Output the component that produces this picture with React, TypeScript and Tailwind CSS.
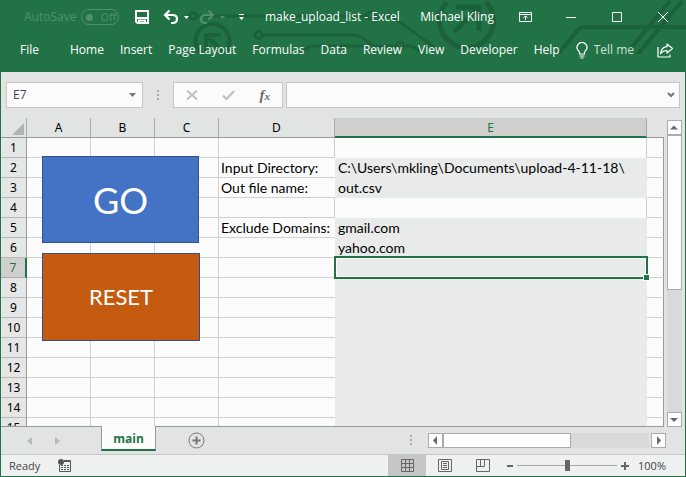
import type { ReactNode } from "react";

const tabs = ["Home", "Insert", "Page Layout", "Formulas", "Data", "Review", "View", "Developer", "Help"];

const cells: Record<number, { d?: string; e?: string }> = {
  2: { d: "Input Directory:", e: "C:\\Users\\mkling\\Documents\\upload-4-11-18\\" },
  3: { d: "Out file name:", e: "out.csv" },
  5: { d: "Exclude Domains:", e: "gmail.com" },
  6: { e: "yahoo.com" },
};

const rows = Array.from({ length: 15 }, (_, i) => i + 1);

function HeaderArt() {
  return (
    <svg className="absolute left-0 top-0 h-[54px] w-[686px]" viewBox="0 0 686 54" fill="none" stroke="#1b613a" strokeWidth="3" aria-hidden="true">
      <circle cx="193" cy="16" r="3.5" />
      <path d="M197 16H367M374 16H392L443 54" />
      <circle cx="370.500" cy="15.500" r="3.500" />
      <circle cx="212.500" cy="41" r="17" strokeWidth="4" />
      <path d="M206 51V35H221M207 36L225 54" strokeWidth="4" />
      <circle cx="258.500" cy="35" r="3.500" />
      <path d="M262 35H354Q360 35 364 39L372 46M302 54Q306 46 314 46H396M404 46H408Q414 46 418 50L424 54" />
      <circle cx="400" cy="45.500" r="3.500" />
      <path d="M447 2A27 27 0 1 0 486 2" strokeWidth="5" />
      <path d="M456 7H479V31M478 8L454 32" strokeWidth="5" />
      <path d="M558 54L578 30Q580 27 584 27H686M626 54L670 1M638 54L682 1" strokeWidth="4" />
    </svg>
  );
}

function Caret({ className }: { className: string }) {
  return (
    <svg className={className} width="5" height="3" viewBox="0 0 5 3" fill="currentColor" aria-hidden="true">
      <path d="M0 0H5L2.500 3Z" />
    </svg>
  );
}

function Undo({ flip }: { flip?: boolean }) {
  return (
    <svg width="16" height="16" viewBox="0 0 16 16" fill="none" stroke="currentColor" strokeWidth="2.200" className={flip ? "-scale-x-100" : ""} aria-hidden="true">
      <path d="M6.500 1.500L2 6L6.500 10.500M2.500 6H9.500Q14 6 14 10T9.500 14H8" />
    </svg>
  );
}

function ScrollButton({ label, d, className = "" }: { label: string; d: string; className?: string }) {
  return (
    <button aria-label={label} className={`flex h-[15px] w-[15px] shrink-0 items-center justify-center border border-[#ababab] bg-[#fdfdfd] text-[#6a6a6a] ${className}`}>
      <svg width="9" height="9" viewBox="0 0 9 9" fill="currentColor" aria-hidden="true">
        <path d={d} />
      </svg>
    </button>
  );
}

function Dots() {
  return (
    <svg width="2" height="10" viewBox="0 0 2 10" fill="#a8a8a8" aria-hidden="true">
      <path d="M0 0H2V2H0ZM0 4H2V6H0ZM0 8H2V10H0Z" />
    </svg>
  );
}

function WindowButton({ label, children }: { label: string; children: ReactNode }) {
  return (
    <button aria-label={label} className="flex h-8 w-[46px] items-center justify-center">
      <svg width="13" height="12" viewBox="0 0 13 12" fill="none" stroke="currentColor" aria-hidden="true">
        {children}
      </svg>
    </button>
  );
}

function TitleBar() {
  return (
    <div className="relative flex h-[34px] items-center pl-6">
      <label className="flex items-center gap-[5px] text-[#4f9169]">
        AutoSave
        <span className="flex h-4 w-[38px] items-center gap-[7px] rounded-full border border-[#4f9169] pl-1 text-[11px]">
          <input type="checkbox" className="h-[7px] w-[7px] shrink-0 appearance-none rounded-full bg-[#4f9169]" />
          Off
        </span>
      </label>
      <button aria-label="Save" className="ml-4">
        <svg width="14" height="14" viewBox="0 0 14 14" fill="none" stroke="currentColor" strokeWidth="2" aria-hidden="true">
          <path d="M1 1H13V13H2.500L1 11.500ZM1 8H13M4 13V10.500H10V13" />
        </svg>
      </button>
      <button aria-label="Undo" className="ml-[14px]">
        <Undo />
      </button>
      <Caret className="ml-[5px]" />
      <button aria-label="Redo" className="ml-[10px] text-[#4f9169]">
        <Undo flip />
      </button>
      <Caret className="ml-[5px] text-[#4f9169]" />
      <button aria-label="Customize Quick Access Toolbar" className="ml-[14px]">
        <svg width="5" height="6" viewBox="0 0 5 6" fill="currentColor" aria-hidden="true">
          <path d="M0 0H5V1H0ZM0 3H5L2.500 6Z" />
        </svg>
      </button>
      <div className="flex-1 whitespace-pre text-center">make_upload_list - Excel</div>
      <div>Michael Kling</div>
      <div className="ml-2 flex">
        <WindowButton label="Ribbon Display Options">
          <path d="M.5 1.500H12.500V10.500H.5ZM.5 3.500H12.500M6.500 9V5M4.500 6.800L6.500 4.800L8.500 6.800" />
        </WindowButton>
        <WindowButton label="Minimize">
          <path d="M1 6.500H11" />
        </WindowButton>
        <WindowButton label="Maximize">
          <path d="M1.500 1.500H10.500V10.500H1.500Z" />
        </WindowButton>
        <WindowButton label="Close">
          <path d="M1 1L11 11M11 1L1 11" />
        </WindowButton>
      </div>
    </div>
  );
}

function RibbonTabs() {
  return (
    <nav className="relative flex h-[38px] items-center whitespace-nowrap pb-[6px] pl-5 pr-3">
      <button className="mr-[31px]">File</button>
      <div className="flex gap-4">
        {tabs.map((t) => (
          <button key={t}>{t}</button>
        ))}
      </div>
      <button className="ml-4 flex items-center gap-[6px] text-[#cfe2d6]">
        <svg width="12" height="17" viewBox="0 0 12 17" fill="none" stroke="#fff" strokeWidth="1.200" aria-hidden="true">
          <path d="M3.500 12V10.500Q3.500 9.500 2 8.200A4.900 4.900 0 1 1 10 8.200Q8.500 9.500 8.500 10.500V12ZM3.500 14H8.500M4.500 16H7.500" />
        </svg>
        Tell me
      </button>
      <button aria-label="Share" className="ml-auto">
        <svg width="17" height="15" viewBox="0 0 17 15" fill="none" stroke="currentColor" strokeWidth="1.200" aria-hidden="true">
          <path d="M1 4V14H13V11.500" />
          <path d="M10 1L15.500 5.500L10 10V7.500Q6 7.500 3.500 10.500Q4.500 4 10 3.700Z" strokeLinejoin="round" />
        </svg>
      </button>
    </nav>
  );
}

function FormulaBar() {
  return (
    <div className="flex items-center pb-[10px] pl-[5px] pr-[5px] pt-[10px]">
      <div className="flex h-[26px] w-[137px] items-center border border-[#c6c6c6] bg-[#fbfbfb] pr-[6px]">
        <input aria-label="Name Box" defaultValue="E7" className="w-full min-w-0 bg-transparent pl-[6px] text-[#444] outline-none" />
        <svg width="7" height="4" viewBox="0 0 7 4" fill="#777" className="shrink-0" aria-hidden="true">
          <path d="M0 0H7L3.500 4Z" />
        </svg>
      </div>
      <div className="flex w-[30px] justify-center">
        <Dots />
      </div>
      <div className="flex h-[26px] w-[110px] shrink-0 items-center justify-between border border-[#c6c6c6] bg-[#fbfbfb] pl-3 pr-3 text-[#c0c0c0]">
        <button aria-label="Cancel">
          <svg width="12" height="10" viewBox="0 0 12 10" fill="none" stroke="currentColor" strokeWidth="2" aria-hidden="true">
            <path d="M1 .5L11 9.500M11 .5L1 9.500" />
          </svg>
        </button>
        <button aria-label="Enter">
          <svg width="13" height="10" viewBox="0 0 13 10" fill="none" stroke="currentColor" strokeWidth="2.200" aria-hidden="true">
            <path d="M1 5.500L4.500 9L12 1" />
          </svg>
        </button>
        <button aria-label="Insert Function" className="font-['Liberation_Serif',serif] text-[15px] font-bold italic leading-4 text-[#6a6a6a]">
          f<span className="text-[11px]">x</span>
        </button>
      </div>
      <div className="ml-[3px] flex h-[26px] flex-1 items-center border border-[#c6c6c6] bg-[#fbfbfb] pr-1">
        <input aria-label="Formula Bar" className="w-full min-w-0 bg-transparent pl-2 text-[#444] outline-none" />
        <svg width="8" height="6" viewBox="0 0 8 6" fill="none" stroke="#777" strokeWidth="2" className="shrink-0" aria-hidden="true">
          <path d="M1 1L4 4L7 1" />
        </svg>
      </div>
    </div>
  );
}

const headCell =
  "h-5 border-b border-r border-b-[#999] border-r-[#ababab] p-0 text-center font-['Noto_Sans',sans-serif] text-[12px] font-normal leading-[19px]";
const gridCell = "h-5 overflow-visible whitespace-nowrap border-b border-r border-[#d0d0d0] p-0";

function Sheet() {
  return (
    <div className="relative min-w-0 flex-1 overflow-hidden border-b border-[#999] font-['Lato','Noto_Sans',sans-serif] text-[14px] text-black">
      <table className="w-full table-fixed border-separate border-spacing-0">
        <colgroup>
          <col className="w-[26px]" />
          <col className="w-16" />
          <col className="w-16" />
          <col className="w-16" />
          <col className="w-[116px]" />
          <col />
          <col className="w-[17px]" />
        </colgroup>
        <thead>
          <tr>
            <th className={headCell} aria-label="Select all">
              <svg width="12" height="12" viewBox="0 0 12 12" fill="#b2b2b2" className="ml-[11px] mt-[2px] block" aria-hidden="true">
                <path d="M12 0V12H0Z" />
              </svg>
            </th>
            {["A", "B", "C", "D"].map((c) => (
              <th key={c} scope="col" className={headCell}>
                {c}
              </th>
            ))}
            <th
              scope="col"
              className="h-5 border-b-2 border-r border-b-[#217346] border-r-[#ababab] bg-[#cfcfcf] p-0 pt-[2px] text-center font-['Noto_Sans',sans-serif] text-[12px] font-normal leading-4 text-[#217346]"
            >
              E
            </th>
            <th className="h-5 border-b border-[#999] p-0" aria-label="Next column" />
          </tr>
        </thead>
        <tbody>
          {rows.map((r) => {
            const filled = r !== 1 && r !== 4;
            return (
              <tr key={r}>
                <th
                  scope="row"
                  className={
                    r === 7
                      ? "h-5 border-b border-r-2 border-b-[#ababab] border-r-[#217346] bg-[#cfcfcf] p-0 text-center font-['Noto_Sans',sans-serif] text-[12px] font-normal leading-[19px] text-[#217346]"
                      : "h-5 border-b border-r border-b-[#b8b8b8] border-r-[#999] bg-[#e4e7e6] p-0 text-center font-['Noto_Sans',sans-serif] text-[12px] font-normal leading-[19px]"
                  }
                >
                  {r}
                </th>
                <td className={`${gridCell} bg-[#fcfcfc]`} />
                <td className={`${gridCell} bg-[#fcfcfc]`} />
                <td className={`${gridCell} bg-[#fcfcfc]`} />
                <td className={`h-5 whitespace-nowrap border-b border-[#d0d0d0] bg-[#fcfcfc] p-0 pl-[2px] leading-[19px] ${filled ? "" : "border-r"}`}>{cells[r]?.d}</td>
                <td
                  className={
                    filled
                      ? "relative h-5 whitespace-nowrap bg-[#e8ebe9] p-0 pl-[3px] leading-5"
                      : "h-5 border-r border-[#d0d0d0] bg-[#fcfcfc] p-0"
                  }
                >
                  {cells[r]?.e}
                  {r === 7 && (
                    <span className="absolute -bottom-px -left-px -right-px -top-[2px] z-10 border-2 border-[#217346] shadow-[inset_0_0_0_1px_#fff]">
                      <span className="absolute -bottom-[4px] -right-[4px] h-[7px] w-[7px] border border-white bg-[#217346]" />
                    </span>
                  )}
                </td>
                <td className="h-5 border-b border-r border-b-[#d0d0d0] border-r-[#999] bg-[#fcfcfc] p-0" />
              </tr>
            );
          })}
        </tbody>
      </table>
      <button className="absolute left-[41px] top-[38px] h-[87px] w-[157px] border border-[#2f528f] bg-[#4472c4] text-[36px] text-white">GO</button>
      <button className="absolute left-[41px] top-[135px] h-[88px] w-[158px] border border-[#2f528f] bg-[#c55a11] text-[22px] text-white">RESET</button>
    </div>
  );
}

function SheetTabs() {
  return (
    <div className="flex h-[27px] shrink-0 items-start pr-[19px]">
      <div className="flex h-[27px] w-[100px] items-center gap-[23px] pl-[26px] text-[#b8b8b8]">
        <button aria-label="Previous sheet">
          <svg width="5" height="8" viewBox="0 0 5 8" fill="currentColor" aria-hidden="true">
            <path d="M5 0V8L0 4Z" />
          </svg>
        </button>
        <button aria-label="Next sheet">
          <svg width="5" height="8" viewBox="0 0 5 8" fill="currentColor" aria-hidden="true">
            <path d="M0 0V8L5 4Z" />
          </svg>
        </button>
      </div>
      <button className="relative -mt-px h-[25px] w-[55px] border-x border-b-2 border-x-[#999] border-b-[#217346] bg-[#fcfcfc] pt-[2px] text-[12px] font-bold text-[#217346]">
        main
      </button>
      <button aria-label="New sheet" className="ml-8 mt-[5px]">
        <svg width="17" height="17" viewBox="0 0 17 17" fill="none" stroke="#777" aria-hidden="true">
          <circle cx="8.500" cy="8.500" r="7.500" />
          <path d="M8.500 4.500V12.500M4.500 8.500H12.500" strokeWidth="2" />
        </svg>
      </button>
      <div className="ml-auto mr-4 mt-2">
        <Dots />
      </div>
      <div className="mt-[6px] flex w-[238px]">
        <ScrollButton label="Scroll left" d="M6 0V9L2 4.500Z" />
        <div className="mr-[2px] flex flex-1 bg-[#d9d9d9]">
          <div className="h-[15px] w-[128px] border border-[#ababab] bg-[#fdfdfd]" />
        </div>
        <ScrollButton label="Scroll right" d="M3 0V9L7 4.500Z" />
      </div>
    </div>
  );
}

function StatusBar() {
  return (
    <footer className="flex h-[22px] shrink-0 items-center border-t border-[#c6c6c6] bg-[#eff1f0] pl-2 pr-[19px] text-[11px] text-[#444]">
      <span>Ready</span>
      <button aria-label="Record macro" className="ml-[18px]">
        <svg width="13" height="13" viewBox="0 0 13 13" fill="none" stroke="#555" aria-hidden="true">
          <path d="M1.500 6V12.500H12.500V1.500H6M6 2.500H12" />
          <circle cx="3" cy="3" r="3" fill="#555" stroke="none" />
          <path d="M3 6.500H11M3 8.500H11M3 10.500H11" strokeDasharray="2 1" />
        </svg>
      </button>
      <div className="ml-auto flex h-full">
        <button aria-label="Normal view" className="flex h-full w-[38px] items-center justify-center bg-[#c6c6c6]">
          <svg width="13" height="13" viewBox="0 0 13 13" fill="none" stroke="#666" aria-hidden="true">
            <path d="M.5 .5H12.500V12.500H.5ZM4.500 0V13M8.500 0V13M0 4.500H13M0 8.500H13" />
          </svg>
        </button>
        <button aria-label="Page layout view" className="flex h-full w-[38px] items-center justify-center">
          <svg width="14" height="13" viewBox="0 0 14 13" fill="none" stroke="#666" aria-hidden="true">
            <path d="M.5 .5H13.500V12.500H.5ZM3.500 2.500H10.500V10.500H3.500ZM5 4.500H9M5 6.500H9M5 8.500H9" />
          </svg>
        </button>
        <button aria-label="Page break preview" className="flex h-full w-[38px] items-center justify-center">
          <svg width="14" height="13" viewBox="0 0 14 13" fill="none" stroke="#666" aria-hidden="true">
            <path d="M.5 .5H13.500V12.500H.5ZM.5 7.500H8.500V.5M4.500 .5V7.500" />
          </svg>
        </button>
      </div>
      <button aria-label="Zoom out" className="ml-[5px] h-[2px] w-[6px] bg-[#666]" />
      <input
        type="range"
        aria-label="Zoom"
        min={0}
        max={200}
        defaultValue={100}
        className="mx-1 h-3 w-[100px] appearance-none bg-[linear-gradient(#a6a6a6,#a6a6a6)] bg-[length:100%_1px] bg-center bg-no-repeat [&::-webkit-slider-thumb]:h-[11px] [&::-webkit-slider-thumb]:w-[5px] [&::-webkit-slider-thumb]:appearance-none [&::-webkit-slider-thumb]:bg-[#666]"
      />
      <button aria-label="Zoom in">
        <svg width="8" height="8" viewBox="0 0 8 8" stroke="#666" strokeWidth="2" aria-hidden="true">
          <path d="M4 0V8M0 4H8" />
        </svg>
      </button>
      <span className="ml-[9px]">100%</span>
    </footer>
  );
}

export default function App() {
  return (
    <div className="flex h-screen flex-col overflow-hidden bg-[#217346] px-px pb-px font-['Open_Sans','Noto_Sans',sans-serif] text-[12px] leading-4">
      <header className="relative -mx-px shrink-0 text-white">
        <HeaderArt />
        <TitleBar />
        <RibbonTabs />
      </header>
      <main className="flex min-h-0 flex-1 flex-col bg-[#e1e4e3]">
        <FormulaBar />
        <div className="flex min-h-0 flex-1">
          <Sheet />
          <div className="ml-[3px] mr-[3px] mt-[2px] flex w-[15px] flex-col bg-[#d9d9d9]">
            <ScrollButton label="Scroll up" d="M0 6.500H8L4 2.500Z" />
            <div className="h-[155px] w-[15px] border border-[#ababab] bg-[#fdfdfd]" />
            <ScrollButton label="Scroll down" d="M0 3H8L4 7Z" className="mt-auto" />
          </div>
        </div>
        <SheetTabs />
      </main>
      <StatusBar />
    </div>
  );
}
